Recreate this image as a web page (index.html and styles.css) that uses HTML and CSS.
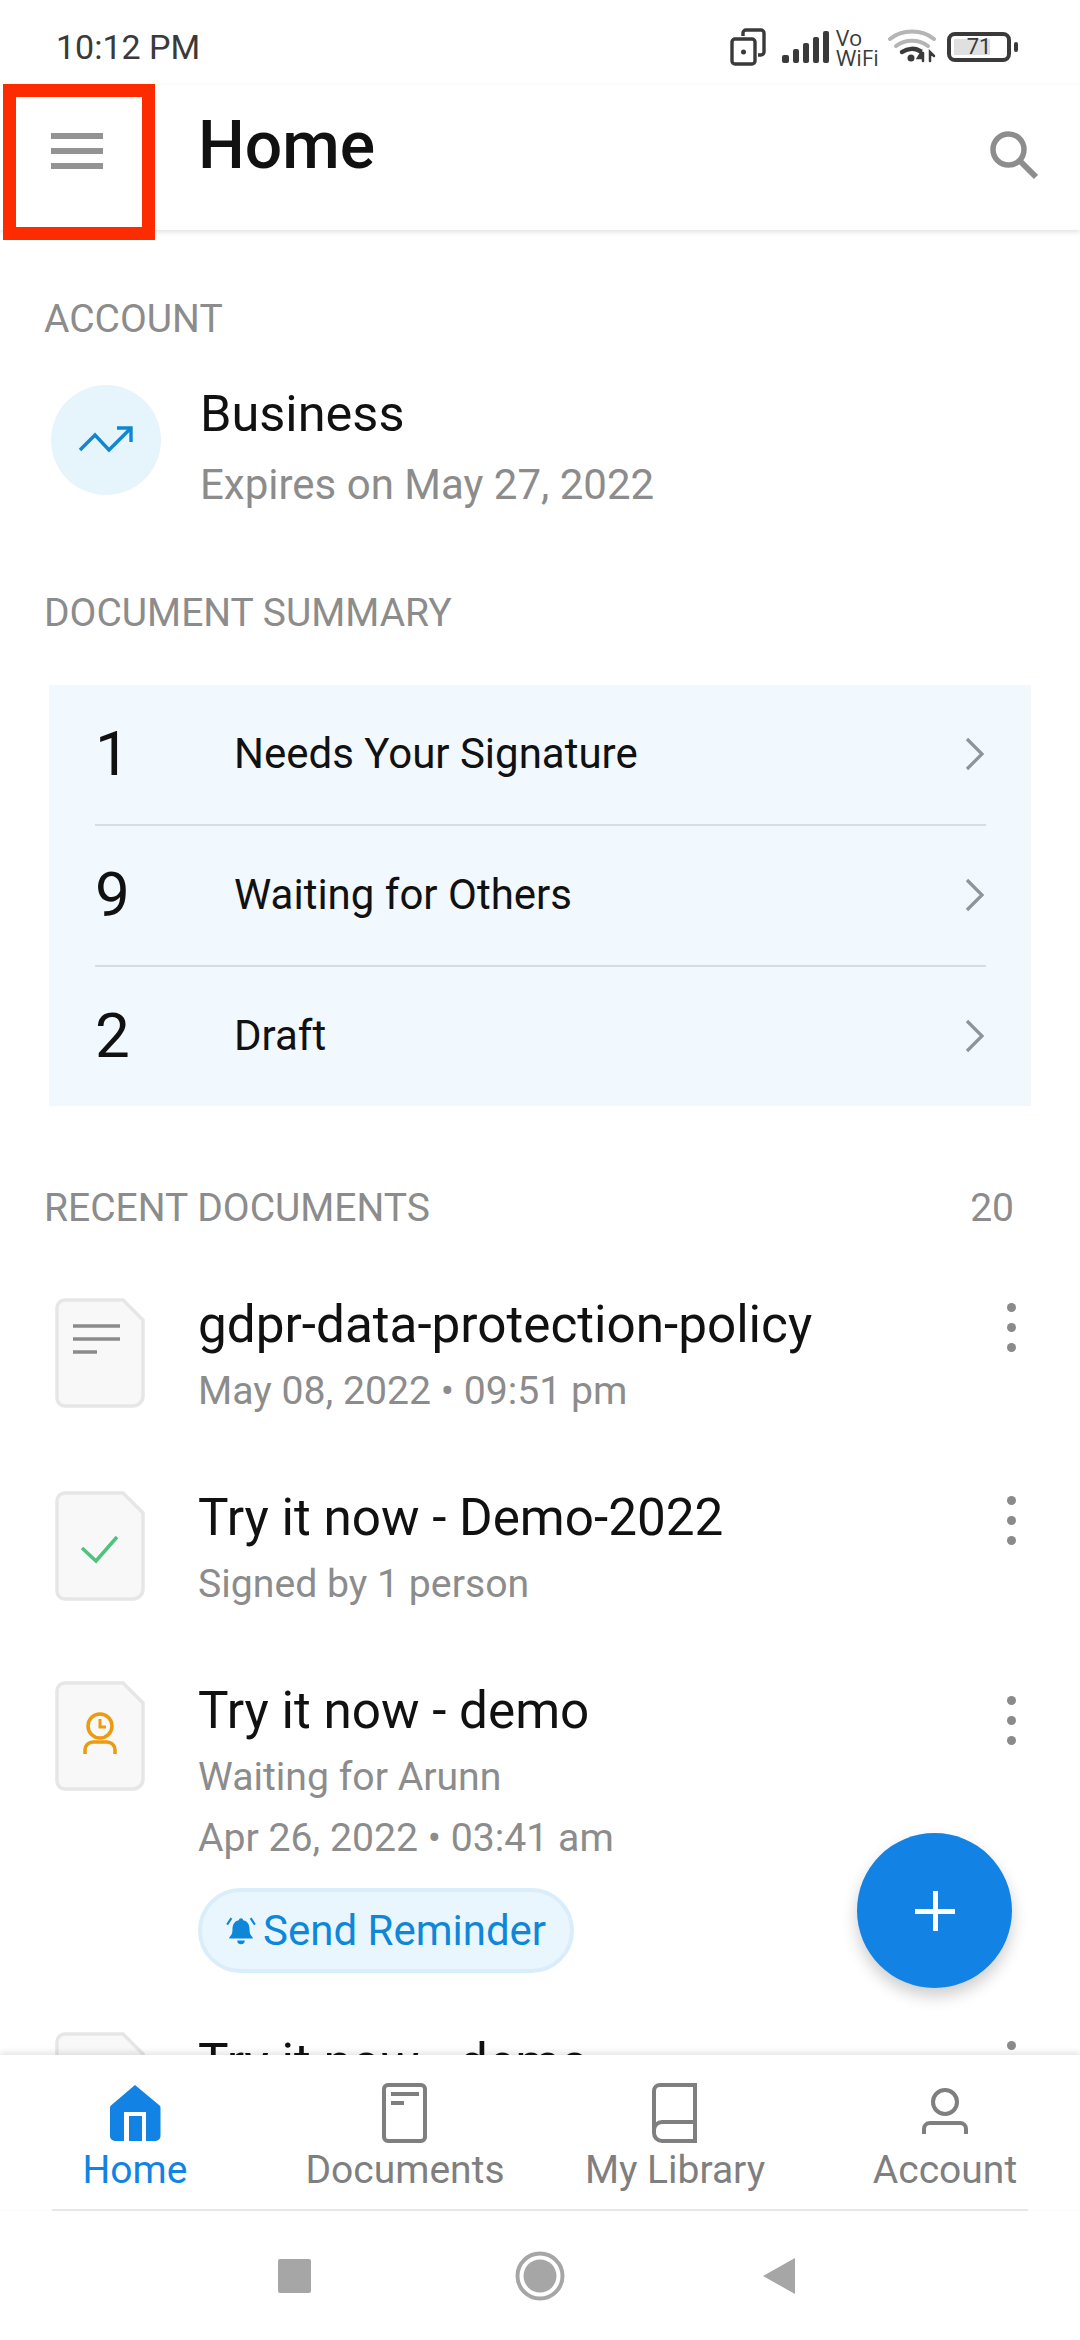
FILE: index.html
```html
<!DOCTYPE html>
<html lang="en">
<head>
<meta charset="utf-8">
<title>Home</title>
<link rel="stylesheet" href="styles.css">
</head>
<body>
<div class="screen">
  <div class="statusbar">
    <span class="time">10:12 PM</span>
    <div class="status-icons">
      <svg class="st-rotate" width="36" height="38" viewBox="0 0 36 38" fill="none" stroke="#3a3a3a" stroke-width="3.4"><rect x="2" y="11" width="23" height="25" rx="3"/><path d="M13 8V5a3 3 0 0 1 3-3h15a3 3 0 0 1 3 3v19a3 3 0 0 1-3 3h-3"/><circle cx="13.500" cy="24" r="2.500" fill="#3a3a3a" stroke="none"/></svg>
      <svg class="st-signal" width="48" height="32" viewBox="0 0 48 32" fill="#3a3a3a"><rect x="0" y="24" width="7" height="8" rx="2"/><rect x="11" y="18" width="6" height="14" rx="2"/><rect x="21" y="12" width="6" height="20" rx="2"/><rect x="31" y="6" width="6" height="26" rx="2"/><rect x="41" y="0" width="6" height="32" rx="2"/></svg>
      <div class="vowifi"><span>Vo</span><span>WiFi</span></div>
      <svg class="st-wifi" width="48" height="36" viewBox="0 0 48 36" fill="none" stroke-linecap="round"><path d="M2 12C14 2 34 2 46 12" stroke="#b5b5b5" stroke-width="4"/><path d="M8 19C17 12 31 12 40 19" stroke="#b5b5b5" stroke-width="4"/><path d="M14 25C20 21 27 21 32 24" stroke="#3a3a3a" stroke-width="4.500"/><circle cx="23" cy="31" r="3.500" fill="#3a3a3a"/><path d="M35 26v8M33 31l-3 0 3-5zM42 34v-9l4 4" stroke="#3a3a3a" stroke-width="2.500"/></svg>
      <div class="battery"><div class="batt-body"><div class="batt-fill"></div><span class="batt-num">71</span></div><div class="batt-cap"></div></div>
    </div>
  </div>

  <header class="appbar">
    <div class="menu-btn">
      <svg width="52" height="36" viewBox="0 0 52 36" fill="#939393"><rect y="0" width="52" height="6"/><rect y="15" width="52" height="6"/><rect y="30" width="52" height="6"/></svg>
    </div>
    <h1 class="appbar-title">Home</h1>
    <svg class="search" width="50" height="50" viewBox="0 0 50 50" fill="none" stroke="#8d8d8d"><circle cx="19.500" cy="19.500" r="15.500" stroke-width="5.500"/><path d="M31 31l16 16" stroke-width="6"/></svg>
  </header>

  <main class="content">
    <h2 class="section-label label-account">ACCOUNT</h2>
    <div class="account">
      <div class="plan-badge">
        <svg width="56" height="30" viewBox="0 0 56 30" fill="none" stroke="#0f87d0" stroke-width="3.400"><path d="M2 25L17 10l14 15L53 3"/><path d="M39 3h14v14"/></svg>
      </div>
      <div class="account-text">
        <div class="plan-name">Business</div>
        <div class="plan-exp">Expires on May 27, 2022</div>
      </div>
    </div>

    <h2 class="section-label label-summary">DOCUMENT SUMMARY</h2>
    <div class="summary">
      <div class="sum-row"><span class="sum-num">1</span><span class="sum-text">Needs Your Signature</span><svg class="chev" width="20" height="34" viewBox="0 0 20 34" fill="none" stroke="#8e9498" stroke-width="3.200"><path d="M2 2l15 15L2 32"/></svg></div>
      <div class="sum-row"><span class="sum-num">9</span><span class="sum-text">Waiting for Others</span><svg class="chev" width="20" height="34" viewBox="0 0 20 34" fill="none" stroke="#8e9498" stroke-width="3.200"><path d="M2 2l15 15L2 32"/></svg></div>
      <div class="sum-row"><span class="sum-num">2</span><span class="sum-text">Draft</span><svg class="chev" width="20" height="34" viewBox="0 0 20 34" fill="none" stroke="#8e9498" stroke-width="3.200"><path d="M2 2l15 15L2 32"/></svg></div>
    </div>

    <div class="recent-head"><h2 class="section-label">RECENT DOCUMENTS</h2><span class="section-label">20</span></div>

    <div class="doc">
      <svg class="doc-icon" width="90" height="110" viewBox="0 0 90 110"><path class="doc-sheet" d="M10 2H68L88 22V98a10 10 0 0 1-10 10H10A8 8 0 0 1 2 100V10a8 8 0 0 1 8-8z"/><path d="M18 28H65M18 41H65M18 54H42" stroke="#8a8a8a" stroke-width="3.500" fill="none"/></svg>
      <div class="doc-body"><div class="doc-title">gdpr-data-protection-policy</div><div class="doc-sub">May 08, 2022 • 09:51 pm</div></div>
      <div class="kebab"><i></i><i></i><i></i></div>
    </div>
    <div class="doc">
      <svg class="doc-icon" width="90" height="110" viewBox="0 0 90 110"><path class="doc-sheet" d="M10 2H68L88 22V98a10 10 0 0 1-10 10H10A8 8 0 0 1 2 100V10a8 8 0 0 1 8-8z"/><path d="M27 57L41 70 62 46" stroke="#4fc27c" stroke-width="3.500" fill="none"/></svg>
      <div class="doc-body"><div class="doc-title">Try it now - Demo-2022</div><div class="doc-sub">Signed by 1 person</div></div>
      <div class="kebab"><i></i><i></i><i></i></div>
    </div>
    <div class="doc doc-tall">
      <svg class="doc-icon" width="90" height="110" viewBox="0 0 90 110"><path class="doc-sheet" d="M10 2H68L88 22V98a10 10 0 0 1-10 10H10A8 8 0 0 1 2 100V10a8 8 0 0 1 8-8z"/><g fill="none" stroke="#ec9a0e" stroke-width="3.500"><circle cx="45" cy="45" r="12"/><path d="M45 38v8h6" stroke-width="3"/><path d="M30 73v-4a8 8 0 0 1 8-8h14a8 8 0 0 1 8 8v4"/></g></svg>
      <div class="doc-body">
        <div class="doc-title">Try it now - demo</div>
        <div class="doc-sub">Waiting for Arunn</div>
        <div class="doc-sub doc-date">Apr 26, 2022 • 03:41 am</div>
        <div class="reminder">
          <svg width="32" height="32" viewBox="0 0 30 30" fill="#0f87d9"><path d="M15 3a2 2 0 0 1 2 2c5 1 6 5 6 9 0 3 1 5 3 7v1H4v-1c2-2 3-4 3-7 0-4 1-8 6-9a2 2 0 0 1 2-2z"/><path d="M11.500 24h7a3.500 3.500 0 0 1-7 0z"/><path d="M6 3L2 9M24 3l4 6" stroke="#0f87d9" stroke-width="2" fill="none"/></svg>
          <span>Send Reminder</span>
        </div>
      </div>
      <div class="kebab"><i></i><i></i><i></i></div>
    </div>
    <div class="doc doc-last">
      <svg class="doc-icon" width="90" height="110" viewBox="0 0 90 110"><path class="doc-sheet" d="M10 2H68L88 22V98a10 10 0 0 1-10 10H10A8 8 0 0 1 2 100V10a8 8 0 0 1 8-8z"/></svg>
      <div class="doc-body"><div class="doc-title">Try it now - demo</div></div>
      <div class="kebab"><i></i><i></i><i></i></div>
    </div>
  </main>

  <nav class="tabs">
    <div class="tab tab-active">
      <svg width="52" height="60" viewBox="0 0 52 60"><path fill="#1283e4" fill-rule="evenodd" d="M26 2L50 22a3 3 0 0 1 1.500 3V53a5 5 0 0 1-5 5H6a5 5 0 0 1-5-5V25a3 3 0 0 1 1.500-3z"/><path fill="#fff" d="M15 29H37V58H33V33H20V58H15z"/></svg>
      <span>Home</span>
    </div>
    <div class="tab">
      <svg width="46" height="60" viewBox="0 0 46 60" fill="none" stroke="#7f7f7f" stroke-width="4"><rect x="2" y="2" width="41" height="56" rx="4"/><path d="M9 11H37M9 20H22"/></svg>
      <span>Documents</span>
    </div>
    <div class="tab">
      <svg width="46" height="60" viewBox="0 0 46 60" fill="none" stroke="#7f7f7f" stroke-width="4"><path d="M2 46V8a6 6 0 0 1 6-6H43V58H10a8 8 0 0 1-8-8V47a8 8 0 0 1 8-8H43"/></svg>
      <span>My Library</span>
    </div>
    <div class="tab">
      <svg width="46" height="60" viewBox="0 0 46 60" fill="none" stroke="#7f7f7f" stroke-width="4"><circle cx="23" cy="19" r="12"/><path d="M2 51V46a6 6 0 0 1 6-6H38a6 6 0 0 1 6 6v5"/></svg>
      <span>Account</span>
    </div>
  </nav>

  <div class="sysnav-line"></div>
  <div class="sysnav">
    <svg class="sys-square" width="36" height="36" viewBox="0 0 36 36"><rect x="1" y="1" width="33" height="34" rx="2" fill="#a6a6a6"/></svg>
    <svg class="sys-home" width="50" height="50" viewBox="0 0 50 50"><circle cx="25" cy="25" r="22.500" fill="none" stroke="#a6a6a6" stroke-width="4"/><circle cx="25" cy="25" r="16.500" fill="#a6a6a6"/></svg>
    <svg class="sys-back" width="36" height="38" viewBox="0 0 36 38"><path d="M1 19L33 1V37z" fill="#a6a6a6"/></svg>
  </div>

  <div class="fab"><svg width="40" height="40" viewBox="0 0 40 40" fill="#fff"><rect x="18" y="0" width="5" height="40"/><rect x="0" y="18" width="40" height="5"/></svg></div>
  <div class="annotation"></div>
</div>
</body>
</html>
```

FILE: styles.css
```css
* { box-sizing: border-box; margin: 0; padding: 0; }
html, body { width: 1080px; height: 2340px; background: #fff; overflow: hidden; }
body { font-family: Roboto, "Noto Sans", sans-serif; color: #111; }

.screen { position: relative; width: 1080px; height: 2340px; display: flex; flex-direction: column; background: #fff; }

.statusbar { height: 85px; flex: none; display: flex; align-items: center; justify-content: space-between; padding: 8px 62px 0 56px; }
.time { font-size: 34px; color: #3a3a3a; }
.status-icons { display: flex; align-items: center; gap: 6px; }
.st-signal { margin-left: 10px; }
.vowifi { display: flex; flex-direction: column; font-family: "Open Sans", sans-serif; font-size: 22px; line-height: 20px; color: #3a3a3a; width: 44px; }
.st-wifi { margin-left: 2px; margin-top: -4px; }
.battery { display: flex; align-items: center; gap: 3px; margin-left: 5px; }
.batt-body { position: relative; width: 64px; height: 30px; border: 4px solid #3a3a3a; border-radius: 8px; display: flex; align-items: center; justify-content: center; }
.batt-fill { position: absolute; left: 3px; top: 3px; bottom: 3px; width: 36px; background: #e0e0e0; }
.batt-num { position: relative; font-size: 22px; line-height: 22px; color: #3a3a3a; }
.batt-cap { width: 4px; height: 10px; background: #3a3a3a; border-radius: 2px; }

.appbar { height: 145px; flex: none; display: flex; align-items: center; padding-bottom: 14px; position: relative; z-index: 2; background: #fff; box-shadow: 0 2px 5px rgba(0,0,0,.12); }
.menu-btn { width: 198px; padding-left: 51px; flex: none; display: flex; align-items: center; }
.appbar-title { font-size: 66px; font-weight: 500; color: #111; flex: 1; line-height: 1; margin-top: -10px; }
.search { margin-right: 41px; margin-top: 8px; }

.content { flex: 1; min-height: 0; overflow: hidden; display: flex; flex-direction: column; }
.section-label { font-size: 39px; font-weight: 400; color: #8c8c8c; line-height: 44px; }
.label-account { margin: 67px 0 0 44px; }
.account { display: flex; margin-top: 29px; padding-left: 51px; align-items: center; }
.plan-badge { width: 110px; height: 110px; border-radius: 50%; background: #e6f4fc; display: flex; align-items: center; justify-content: center; flex: none; margin-top: -1px; }
.account-text { margin-left: 39px; padding-top: 14px; }
.plan-name { font-size: 50.500px; line-height: 60px; color: #111; }
.plan-exp { font-size: 42px; line-height: 50px; margin-top: 16px; color: #8c8c8c; }
.label-summary { margin: 81px 0 0 44px; }

.summary { margin: 50px 49px 0 49px; background: #f1f8fe; padding: 0 45px 0 46px; }
.sum-row { height: 141px; display: flex; align-items: center; border-bottom: 2px solid #d5dde3; }
.sum-row:last-child { border-bottom: 0; height: 139px; }
.sum-num { width: 139px; font-size: 62px; color: #111; flex: none; margin-top: -2px; }
.sum-text { flex: 1; font-size: 42px; color: #111; margin-top: -2px; }
.chev { margin-right: 1px; margin-top: -2px; }

.recent-head { display: flex; justify-content: space-between; margin-top: 80px; padding: 0 66px 0 44px; }

.doc { display: flex; padding: 0 64px 0 55px; height: 193px; flex: none; }
.doc-tall { height: 352px; }
.recent-head + .doc { margin-top: 70px; }
.doc-icon { flex: none; margin-top: -2px; }
.doc-tall .doc-icon { margin-top: -5px; }
.doc-last .doc-icon { margin-top: -6px; }
.doc-sheet { fill: #f8f8f8; stroke: #e6e6e6; stroke-width: 3.500; }
.doc-body { flex: 1; margin-left: 53px; min-width: 0; }
.doc-title { font-size: 51.250px; line-height: 60px; color: #111; margin-top: -5px; }
.doc-sub { font-size: 39.200px; line-height: 48px; color: #8c8c8c; margin-top: 12px; }
.doc-date { margin-top: 13px; }
.reminder { display: inline-flex; align-items: center; gap: 6px; height: 85px; margin-top: 26px; padding: 0 24px 0 23px; border: 4px solid #d9edfb; border-radius: 43px; background: #e9f6fe; color: #0f87d9; font-size: 42px; }
.kebab { width: 9px; display: flex; flex-direction: column; gap: 11px; margin-top: 3px; flex: none; align-self: flex-start; }
.doc-tall .kebab { margin-top: 10px; }
.kebab i { display: block; width: 9px; height: 9px; border-radius: 50%; background: #8a8a8a; }

.tabs { height: 154px; flex: none; display: flex; position: relative; z-index: 2; background: #fff; box-shadow: 0 -3px 6px rgba(0,0,0,.1); }
.tab { flex: 1; display: flex; flex-direction: column; align-items: center; padding-top: 28px; font-size: 39px; color: #7f7f7f; }
.tab span { line-height: 44px; margin-top: 5px; }
.tab-active { color: #1283e4; }

.sysnav-line { height: 2px; flex: none; margin: 0 52px 0 52px; background: #e8e8e8; }
.sysnav { height: 129px; flex: none; display: flex; align-items: center; padding-left: 277px; }
.sys-square { margin-right: 202px; }
.sys-home { margin-right: 197px; }

.fab { position: absolute; left: 857px; top: 1833px; width: 155px; height: 155px; border-radius: 50%; background: #1283e4; display: flex; align-items: center; justify-content: center; box-shadow: 0 8px 16px rgba(0,0,0,.2); z-index: 3; }
.annotation { position: absolute; left: 3px; top: 84px; width: 152px; height: 156px; border: 13px solid #fd2c00; z-index: 4; }
```
